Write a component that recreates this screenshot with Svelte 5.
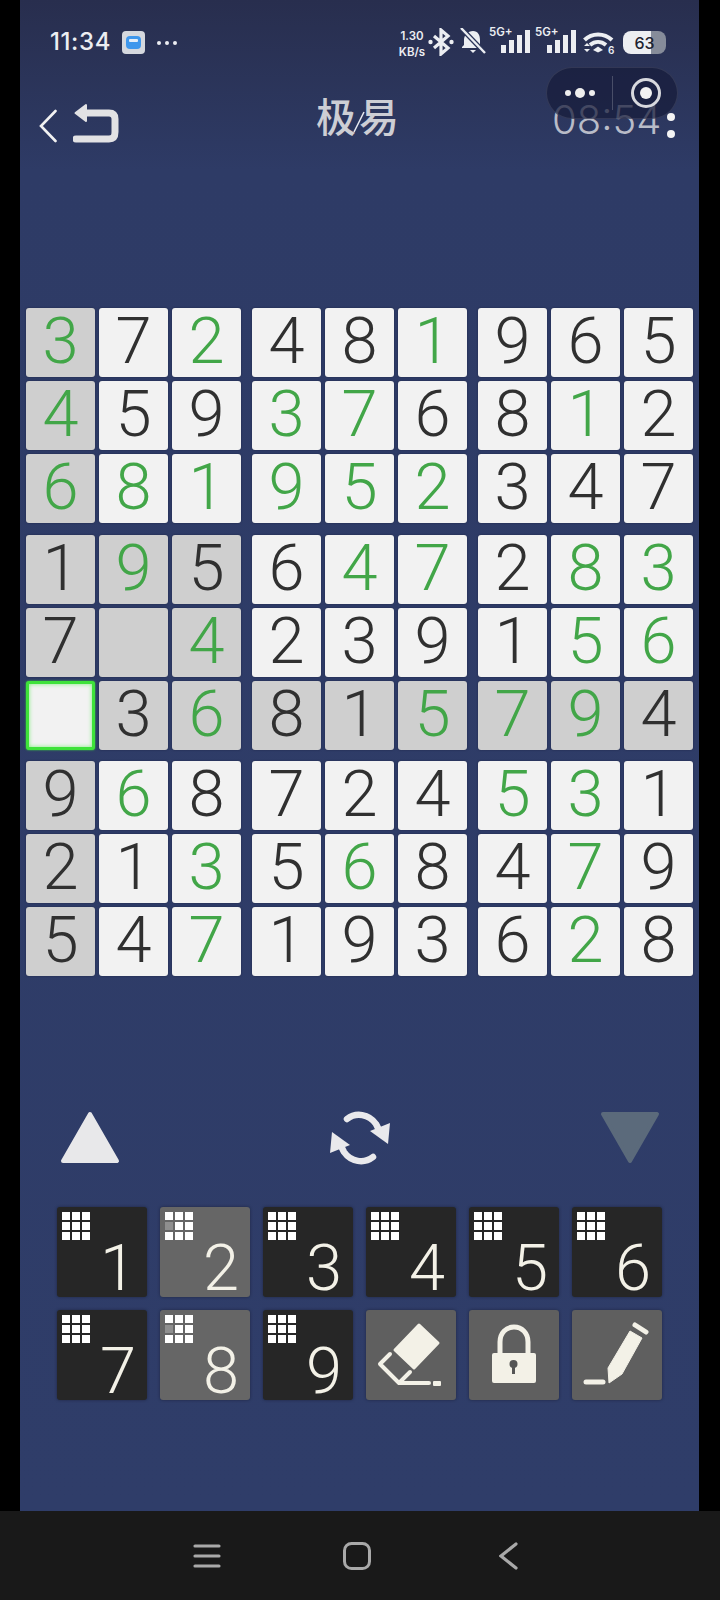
<script>
	// g = given in green, plain digit = dark, empty string = no digit
	const ROWS = [
		['3g', '7', '2g', '4', '8', '1g', '9', '6', '5'],
		['4g', '5', '9', '3g', '7g', '6', '8', '1g', '2'],
		['6g', '8g', '1g', '9g', '5g', '2g', '3', '4', '7'],
		['1', '9g', '5', '6', '4g', '7g', '2', '8g', '3g'],
		['7', '', '4g', '2', '3', '9', '1', '5g', '6g'],
		['', '3', '6g', '8', '1', '5g', '7g', '9g', '4'],
		['9', '6g', '8', '7', '2', '4', '5g', '3g', '1'],
		['2', '1', '3g', '5', '6g', '8', '4', '7g', '9'],
		['5', '4', '7g', '1', '9', '3', '6', '2g', '8']
	];
	const SEL_R = 5;
	const SEL_C = 0;

	const blocks = [];
	for (let b = 0; b < 9; b++) {
		const r0 = Math.floor(b / 3) * 3;
		const c0 = (b % 3) * 3;
		const cells = [];
		for (let r = r0; r < r0 + 3; r++) {
			for (let c = c0; c < c0 + 3; c++) {
				const v = ROWS[r][c];
				const peer = r === SEL_R || c === SEL_C || (r >= 3 && r < 6 && c < 3);
				cells.push({
					digit: v.replace('g', ''),
					green: v.endsWith('g'),
					sel: r === SEL_R && c === SEL_C,
					peer: peer && !(r === SEL_R && c === SEL_C)
				});
			}
		}
		blocks.push(cells);
	}

	const KEYS = [
		{ n: 1 },
		{ n: 2, dim: true },
		{ n: 3 },
		{ n: 4 },
		{ n: 5 },
		{ n: 6 },
		{ n: 7 },
		{ n: 8, dim: true },
		{ n: 9 }
	];
</script>

<div class="page">
	<div class="screen">
		<div class="status">
			<span class="clock">11:34</span>
			<svg class="app-ic" width="23" height="23" viewBox="0 0 23 23">
				<rect width="23" height="23" rx="4" fill="#d5d8de" />
				<rect x="4" y="5" width="15" height="13" rx="4" fill="#3f97ec" />
				<rect x="7" y="8" width="9" height="3" rx="1" fill="#e6eef8" />
			</svg>
			<span class="more"><i></i><i></i><i></i></span>
			<div class="status-r">
				<div class="speed"><span>1.30</span><span>KB/s</span></div>
				<svg class="bt" width="26" height="28" viewBox="0 0 26 28" fill="none" stroke="#eceef2" stroke-width="3.200">
					<path d="M6 8l14 12-7 6V2l7 6L6 20" />
					<circle cx="2.500" cy="14" r="2.200" fill="#eceef2" stroke="none" />
					<circle cx="23.500" cy="14" r="2.200" fill="#eceef2" stroke="none" />
				</svg>
				<svg class="bell" width="26" height="26" viewBox="0 0 26 26">
					<path d="M13 3c5 0 7 4 7 9v5l2 2v1H2v-1l2-2v-5c0-5 4-9 9-9z" fill="#eceef2" />
					<path d="M10 22h6l-3 3z" fill="#eceef2" />
					<path d="M1 0l24 25" stroke="#2a3458" stroke-width="5" />
					<path d="M1 0l24 25" stroke="#eceef2" stroke-width="2.400" />
				</svg>
				{#each [0, 1] as s (s)}
					<div class="signal">
						<span class="net">5G+</span>
						<i style="height:8px"></i><i style="height:13px"></i><i style="height:18px"></i><i style="height:23px"></i>
					</div>
				{/each}
				<svg class="wifi" width="32" height="25" viewBox="0 0 32 25" fill="none" stroke="#eceef2" stroke-width="4">
					<path d="M1.500 10C9 2.500 21 2.500 29 10" />
					<path d="M7 15c5-4 11-4 16 0" />
					<path d="M10 20l5-3.500 5 3.500-5 2.500z" fill="#eceef2" stroke="none" />
					<path d="M1 16l3-3 3 3zM1 19l3 3 3-3z" fill="#eceef2" stroke="none" />
					<text x="25" y="24" class="wifi-n">6</text>
				</svg>
				<div class="battery">
					<span class="batt-n">63</span>
				</div>
			</div>
		</div>

		<div class="header">
			<svg class="chev" width="18" height="34" viewBox="0 0 18 34" fill="none" stroke="#f2f2f2" stroke-width="2.600" stroke-linecap="round">
				<path d="M16.500 2L2 17l14.500 15" />
			</svg>
			<svg class="undo" width="46" height="41" viewBox="0 0 46 41" fill="none" stroke="#e2e2e4" stroke-width="7" stroke-linecap="round" stroke-linejoin="round">
				<path d="M14 11h22c4 0 6 2 6 6v13c0 5-2 7-6 7H3" />
				<path d="M2.500 11L13 3v16z" fill="#e2e2e4" stroke-width="2" />
			</svg>
			<span class="title">极易<svg class="slash" width="14" height="22" viewBox="0 0 14 22"><path d="M2 21L12 1" stroke="#e8eaf0" stroke-width="1.600" /></svg></span>
			<span class="timer">08:54</span>
			<div class="capsule">
				<span class="caps-dots"><i></i><i class="big"></i><i></i></span>
				<span class="caps-line"></span>
				<span class="caps-target"><i></i></span>
			</div>
			<span class="side-dots"><i></i><i></i></span>
		</div>

		<div class="board">
			{#each blocks as cells, b (b)}
				<div class="block">
					{#each cells as cell, i (i)}
						<div class="cell" class:peer={cell.peer} class:sel={cell.sel} class:green={cell.green}>{cell.digit}</div>
					{/each}
				</div>
			{/each}
		</div>

		<div class="controls">
			<svg width="60" height="53" viewBox="0 0 60 53">
				<path d="M30 3L57 50H3z" fill="#e8e8ea" stroke="#e8e8ea" stroke-width="4" stroke-linejoin="round" />
			</svg>
			<svg class="refresh" width="64" height="62" viewBox="0 0 64 62" fill="none" stroke="#e9e9ec" stroke-width="6.500" stroke-linecap="round">
				<path d="M19 12c9-7 22-5 29 5l2 4" />
				<path d="M45 50c-9 7-22 5-29-5l-2-4" />
				<path d="M42 24l20-8-2 21z" fill="#e9e9ec" stroke="none" />
				<path d="M22 38L2 46l2-21z" fill="#e9e9ec" stroke="none" />
			</svg>
			<svg width="60" height="53" viewBox="0 0 60 53">
				<path d="M30 50L57 3H3z" fill="#5b6a7b" stroke="#5b6a7b" stroke-width="4" stroke-linejoin="round" />
			</svg>
		</div>

		<div class="keypad">
			{#each KEYS as k (k.n)}
				<div class="key" class:dim={k.dim}>
					<span class="mini">
						{#each Array(9) as _, i (i)}
							<i class:off={k.dim && i === 3}></i>
						{/each}
					</span>
					<span class="key-n">{k.n}</span>
				</div>
			{/each}
			<div class="key dim tool">
				<svg width="90" height="90" viewBox="0 0 90 90">
					<path d="M53 15l19 18-24 25-19-18z" fill="#f3f1e7" stroke="#f3f1e7" stroke-width="3" stroke-linejoin="round" />
					<path d="M24 44L14 54l19 19h30M44 62L33 73" fill="none" stroke="#f3f1e7" stroke-width="4" stroke-linecap="round" stroke-linejoin="round" />
					<rect x="67" y="71" width="8" height="5" rx="1" fill="#f3f1e7" />
				</svg>
			</div>
			<div class="key dim tool">
				<svg width="90" height="90" viewBox="0 0 90 90">
					<path d="M31 44V32c0-9 6-15 14-15s14 6 14 15v12" fill="none" stroke="#f3f1e7" stroke-width="5" />
					<path d="M25 43h40a2 2 0 0 1 2 2v26a2 2 0 0 1-2 2H25a2 2 0 0 1-2-2V45a2 2 0 0 1 2-2z" fill="#f3f1e7" />
					<circle cx="44.500" cy="54" r="4" fill="#555" />
					<rect x="43" y="54" width="3" height="10" fill="#555" />
				</svg>
			</div>
			<div class="key dim tool">
				<svg width="90" height="90" viewBox="0 0 90 90">
					<path d="M37 73l-1-15 22-37 12 7-20 36z" fill="#f3f1e7" stroke="#f3f1e7" stroke-width="1" stroke-linejoin="round" />
					<path d="M63 15l11 7" stroke="#f3f1e7" stroke-width="5" stroke-linecap="round" />
					<path d="M14 72h17" stroke="#f3f1e7" stroke-width="5" stroke-linecap="round" />
				</svg>
			</div>
		</div>
	</div>

	<div class="nav">
		<svg width="28" height="24" viewBox="0 0 28 24" fill="none" stroke="#a9a9a9" stroke-width="3.200" stroke-linecap="round">
			<path d="M2 2h24M2 12h24M2 22h24" />
		</svg>
		<svg width="28" height="28" viewBox="0 0 28 28" fill="none" stroke="#a9a9a9" stroke-width="3">
			<rect x="1.500" y="1.500" width="25" height="25" rx="7" />
		</svg>
		<svg width="19" height="28" viewBox="0 0 19 28" fill="none" stroke="#a9a9a9" stroke-width="3.200" stroke-linecap="round">
			<path d="M17 2L2 14l15 12" />
		</svg>
	</div>
</div>

<style>
	:global(body) {
		background: #000;
	}
	.page {
		width: 720px;
		height: 1600px;
		background: #000;
		display: flex;
		flex-direction: column;
		font-family: 'Roboto', 'Noto Sans CJK SC', sans-serif;
		overflow: hidden;
	}
	.screen {
		width: 679px;
		height: 1511px;
		margin-left: 20px;
		background: linear-gradient(#282e4e 0, #2e3b66 170px, #2f3d69 1511px);
		display: flex;
		flex-direction: column;
	}
	.status {
		height: 84px;
		padding: 26px 33px 0 30px;
		box-sizing: border-box;
		display: flex;
		align-items: flex-start;
		color: #eceef2;
		font-family: 'Inter', sans-serif;
	}
	.clock {
		font-size: 24px;
		line-height: 32px;
		letter-spacing: 0.6px;
		font-weight: 500;
		width: 72px;
	}
	.app-ic {
		margin-top: 5px;
	}
	.more {
		display: flex;
		gap: 4px;
		margin: 15px 0 0 12px;
	}
	.more i {
		width: 4px;
		height: 4px;
		border-radius: 50%;
		background: #eceef2;
	}
	.status-r {
		margin-left: auto;
		display: flex;
		align-items: flex-start;
		padding-top: 2px;
	}
	.speed {
		display: flex;
		flex-direction: column;
		align-items: center;
		width: 28px;
		font-weight: 600;
		font-size: 11.500px;
		line-height: 16px;
		margin-right: 2px;
	}
	.bell {
		margin: 0 3px 0 6px;
	}
	.signal {
		position: relative;
		display: flex;
		align-items: flex-end;
		gap: 3px;
		height: 25px;
		width: 46px;
		padding-left: 12px;
		box-sizing: border-box;
	}
	.signal i {
		width: 5px;
		background: #eceef2;
	}
	.net {
		position: absolute;
		left: 0;
		top: -3px;
		font-size: 11.500px;
		font-weight: 600;
	}
	.wifi {
		margin: 2px 8px 0 2px;
	}
	.wifi-n {
		font-size: 10px;
		font-weight: 600;
		fill: #eceef2;
		stroke: none;
	}
	.battery {
		width: 43px;
		height: 23px;
		margin-top: 3px;
		border-radius: 8px;
		background: linear-gradient(90deg, #eceef2 0 66%, #868c9a 66% 100%);
		display: flex;
		align-items: center;
		justify-content: center;
		color: #1e2230;
	}
	.batt-n {
		font-size: 16px;
		font-weight: 500;
	}
	.header {
		position: relative;
		height: 66px;
		display: flex;
		align-items: flex-start;
		color: #c9cad0;
	}
	.chev {
		margin: 25px 0 0 19px;
	}
	.undo {
		margin: 18px 0 0 16px;
	}
	.title {
		position: absolute;
		left: 296px;
		top: 10px;
		font-size: 40px;
		line-height: 50px;
		letter-spacing: 3px;
		font-weight: 500;
		color: #cdced4;
	}
	.slash {
		position: absolute;
		left: 36px;
		top: 17px;
	}
	.timer {
		position: absolute;
		left: 532px;
		top: 12px;
		font-family: 'Inter', sans-serif;
		font-size: 40px;
		line-height: 48px;
		font-weight: 300;
		color: #b9bcc8;
	}
	.capsule {
		position: absolute;
		left: 526px;
		top: -17px;
		width: 132px;
		height: 52px;
		box-sizing: border-box;
		border: 1px solid rgba(255, 255, 255, 0.1);
		border-radius: 26px;
		background: rgba(22, 28, 58, 0.72);
		display: flex;
		align-items: center;
	}
	.caps-dots {
		display: flex;
		align-items: center;
		gap: 4px;
		margin-left: 18px;
	}
	.caps-dots i {
		width: 6px;
		height: 6px;
		border-radius: 50%;
		background: #eee;
	}
	.caps-dots i.big {
		width: 10px;
		height: 10px;
	}
	.caps-line {
		width: 1px;
		height: 34px;
		background: rgba(255, 255, 255, 0.2);
		margin-left: 17px;
	}
	.caps-target {
		width: 30px;
		height: 30px;
		box-sizing: border-box;
		border: 3px solid #d8d9de;
		border-radius: 50%;
		margin-left: 18px;
		display: flex;
		align-items: center;
		justify-content: center;
	}
	.caps-target i {
		width: 12px;
		height: 12px;
		border-radius: 50%;
		background: #f2f2f2;
	}
	.side-dots {
		position: absolute;
		left: 647px;
		top: 29px;
		display: flex;
		flex-direction: column;
		gap: 9px;
	}
	.side-dots i {
		width: 8px;
		height: 8px;
		border-radius: 50%;
		background: #f4f4f4;
	}
	.board {
		margin: 158px 0 0 6px;
		display: grid;
		grid-template-columns: repeat(3, 215px);
		column-gap: 11px;
		row-gap: 11.500px;
	}
	.block {
		display: grid;
		grid-template-columns: repeat(3, 69px);
		grid-auto-rows: 69px;
		gap: 4px;
	}
	.cell {
		box-sizing: border-box;
		padding-bottom: 3px;
		border-radius: 3px;
		background: #f2f2f2;
		box-shadow: 0 0 2px rgba(24, 30, 56, 0.7);
		color: #303030;
		display: flex;
		align-items: center;
		justify-content: center;
		font-size: 65px;
		font-weight: 300;
		line-height: 66px;
	}
	.cell.peer {
		background: #cfcfcf;
	}
	.cell.green {
		color: #42a648;
	}
	.cell.sel {
		border: 3px solid #3ee23a;
		box-shadow: inset 0 0 4px #7cf078, 0 0 2px #3ee23a;
	}
	.controls {
		margin-top: 135px;
		padding: 0 39px 0 40px;
		display: flex;
		justify-content: space-between;
		align-items: flex-start;
	}
	.refresh {
		margin-top: -4px;
	}
	.keypad {
		margin: 38px 0 0 37px;
		display: grid;
		grid-template-columns: repeat(6, 90px);
		grid-auto-rows: 90px;
		gap: 13px;
	}
	.key {
		position: relative;
		border-radius: 3px;
		background: #262626;
		box-shadow: 0 0 3px rgba(20, 24, 40, 0.6);
	}
	.key.dim {
		background: #666;
	}
	.key.tool {
		background: #5f5f5f;
	}
	.key.tool svg {
		display: block;
	}
	.mini {
		position: absolute;
		left: 5px;
		top: 5px;
		display: grid;
		grid-template-columns: repeat(3, 8px);
		grid-auto-rows: 8px;
		gap: 2px;
	}
	.mini i {
		background: #fff;
	}
	.mini i.off {
		background: #8f8f8f;
	}
	.key-n {
		position: absolute;
		right: 11px;
		bottom: 0;
		font-size: 65px;
		font-weight: 300;
		line-height: 58px;
		color: #f3f1e7;
	}
	.nav {
		flex: 1;
		background: #191919;
		display: grid;
		grid-template-columns: 150px 156px 19px;
		padding-left: 193px;
		align-items: center;
	}
	.nav svg {
		display: block;
	}
</style>
